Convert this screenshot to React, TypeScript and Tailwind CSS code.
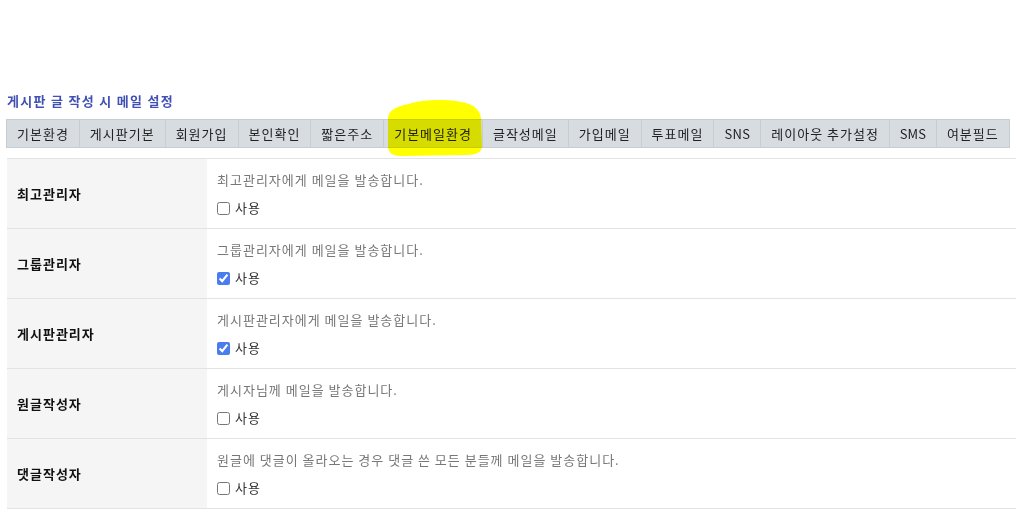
import React from 'react';

const tabs = [
  '기본환경',
  '게시판기본',
  '회원가입',
  '본인확인',
  '짧은주소',
  '기본메일환경',
  '글작성메일',
  '가입메일',
  '투표메일',
  'SNS',
  '레이아웃 추가설정',
  'SMS',
  '여분필드',
];

interface MailRow {
  label: string;
  description: string;
  checked: boolean;
}

const rows: MailRow[] = [
  { label: '최고관리자', description: '최고관리자에게 메일을 발송합니다.', checked: false },
  { label: '그룹관리자', description: '그룹관리자에게 메일을 발송합니다.', checked: true },
  { label: '게시판관리자', description: '게시판관리자에게 메일을 발송합니다.', checked: true },
  { label: '원글작성자', description: '게시자님께 메일을 발송합니다.', checked: false },
  {
    label: '댓글작성자',
    description: '원글에 댓글이 올라오는 경우 댓글 쓴 모든 분들께 메일을 발송합니다.',
    checked: false,
  },
];

// latin-only tab labels get tighter spacing than the hangul ones
const tabTracking = (tab: string) => {
  if (tab === 'SMS') return 'tracking-normal';
  if (tab === 'SNS') return 'tracking-[0.3px]';
  return '';
};

// yellow marker scribble over the current tab
const Highlight = () => (
  <svg
    className="pointer-events-none absolute left-0 top-0 mix-blend-multiply"
    width="1016"
    height="516"
    viewBox="0 0 1016 516"
  >
    <path
      d="M388 118 C388 110 398 106 409 104 C420 100 440 99 456 101 C471 103 480 108 481 118 L482 146 C482 152 477 155 466 155 L400 156 C392 156 388 152 388 146 Z"
      fill="#ffff00"
    />
  </svg>
);

const App: React.FC = () => {
  return (
    <div
      className="relative h-[516px] w-[1016px] overflow-hidden bg-white pl-[6px] pt-[91px] tracking-[1px]"
      style={{ fontFamily: '"Noto Sans CJK KR", "Noto Sans", sans-serif' }}
    >
      <h2 className="ml-px text-[13px] font-bold leading-5 tracking-[1.3px] text-[#4050b4]">
        게시판 글 작성 시 메일 설정
      </h2>

      <ul className="mt-2 flex w-fit border border-[#c8cdd2] bg-[#d7dce1]">
        {tabs.map((tab, i) => (
          <li
            key={tab}
            className={`whitespace-pre px-[10px] text-[13px] leading-[27px] text-[#222] ${tabTracking(tab)} ${
              i > 0 ? 'border-l border-[#c8cdd2]' : ''
            }`}
          >
            {tab}
          </li>
        ))}
      </ul>

      <table className="ml-px mt-[10px] w-[1010px] border-collapse border-t border-[#e3e3e3]">
        <tbody>
          {rows.map((row) => (
            <tr key={row.label} className="h-[70px] border-b border-[#e3e3e3]">
              <th className="w-[200px] bg-[#f5f5f5] pl-[10px] text-left text-[13px] font-bold text-[#111]">
                {row.label}
              </th>
              <td className="px-[10px] pb-[10px] pt-[11px] align-top">
                <p className="text-[13px] leading-5 text-[#777]">{row.description}</p>
                <label className="mt-2 flex h-5 items-center gap-[5px] text-[13px] text-[#333]">
                  <input
                    type="checkbox"
                    defaultChecked={row.checked}
                    className="m-0 h-[13px] w-[13px] accent-[#4a7cf0]"
                  />
                  사용
                </label>
              </td>
            </tr>
          ))}
        </tbody>
      </table>

      <Highlight />
    </div>
  );
};

export default App;
